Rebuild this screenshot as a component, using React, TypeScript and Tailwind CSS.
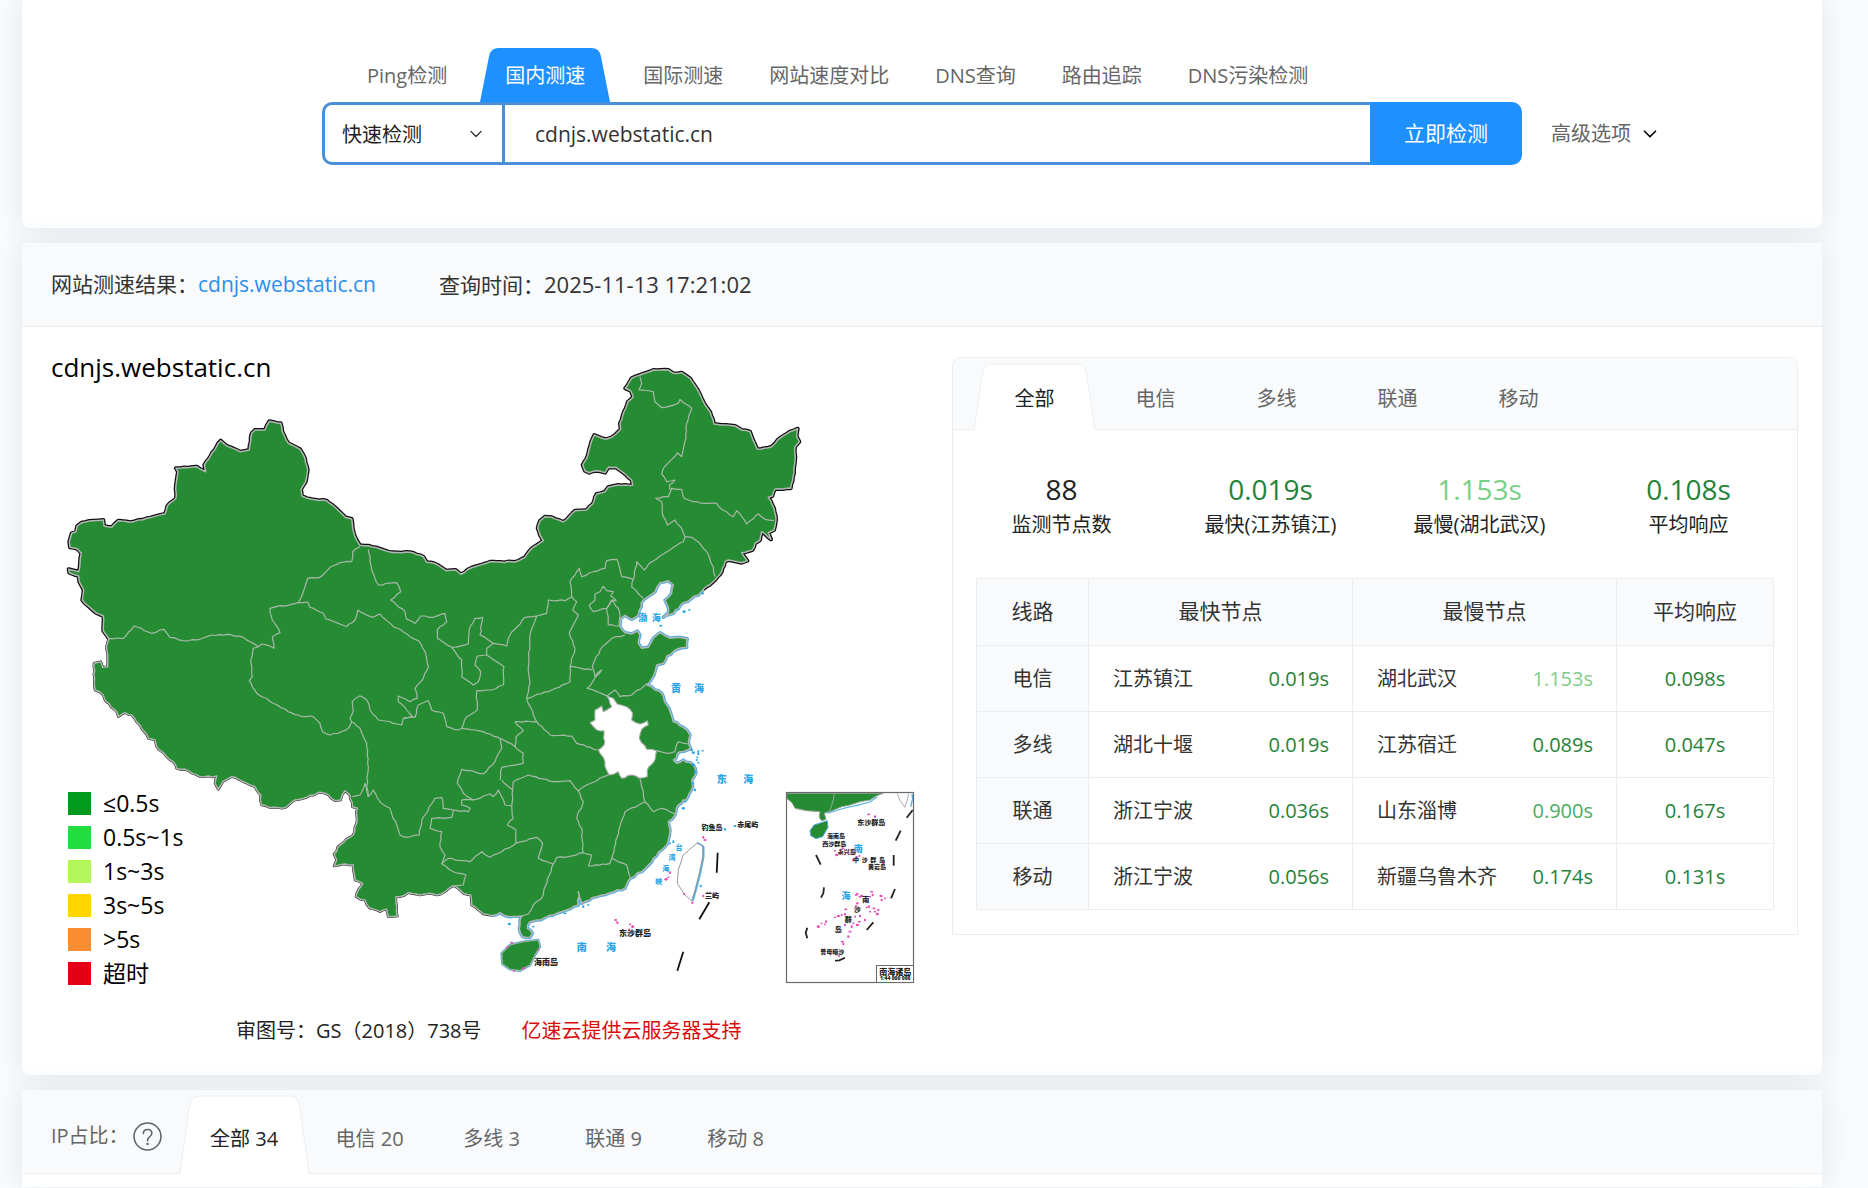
import { ChevronDown } from "lucide-react";
import type { ReactNode } from "react";

type Point = [number, number];

/* ---------- Map geometry ---------- */

// Sheets are digitised at three units per map pixel, each with its own origin.
const sheetOrigins = {
  west: [40, 400],
  northeast: [540, 350],
  north: [360, 520],
  east: [560, 560],
  south: [320, 740],
  inset: [770, 780],
} as const;

type Sheet = keyof typeof sheetOrigins;

function at(sheet: Sheet, list: string): Point[] {
  const [ox, oy] = sheetOrigins[sheet];
  return list
    .trim()
    .split(/\s+/)
    .map((pair) => {
      const [x, y] = pair.split(",").map(Number);
      return [ox + x / 3, oy + y / 3] as Point;
    });
}

// Breaks long segments into slightly displaced ones, as real borders are never straight.
function roughen(points: Point[], amount = 1): Point[] {
  const out: Point[] = [];
  points.forEach((p, i) => {
    out.push(p);
    const q = points[i + 1];
    if (!q) return;
    const dx = q[0] - p[0];
    const dy = q[1] - p[1];
    const len = Math.hypot(dx, dy);
    const steps = Math.floor(len / 3.5);
    for (let k = 1; k < steps; k++) {
      const t = k / steps;
      const seed = Math.sin(p[0] * 12.9 + p[1] * 78.2 + k * 37.7) * 4375.5;
      const off = (seed - Math.floor(seed) - 0.5) * 2 * amount;
      out.push([p[0] + dx * t - (dy / len) * off, p[1] + dy * t + (dx / len) * off]);
    }
  });
  return out;
}

function path(points: Point[], closed = false) {
  return "M" + points.map(([x, y]) => `${x.toFixed(1)} ${y.toFixed(1)}`).join("L") + (closed ? "Z" : "");
}

const northBorder = roughen([
  ...at("west", "207,716 190,692 190,648 168,638 145,618 127,600 131,570 118,545 116,528 88,518 86,508 116,515 120,490 124,460 112,446 90,442 88,425 95,400 108,395 112,378 125,368 160,362 190,360 192,378 215,382 235,362 270,367 320,355 375,342 382,318 408,295 408,255 414,215 408,205 470,200 480,207 497,215 493,195 542,122 560,138 600,155 628,150 635,100 645,90 675,90 688,64 722,70 727,95 745,130 780,148 795,175 803,210 797,245 783,268 786,288 815,298 860,302 885,322 915,352 935,357 938,385 945,410 960,436 985,437 1030,450 1060,458"),
  ...at("north", "100,97 150,97 190,110 200,127 222,130 258,152 287,150 302,163 335,143 390,125 465,126 495,112 518,83 550,62 540,45 533,25"),
  ...at("northeast", "0,513 15,500 35,502 70,516 105,482 140,480 158,462 170,432 195,425 205,412 235,405 278,406 275,390 250,368 228,352 205,352 195,368 172,362 148,368 135,362 128,345 140,325 150,290 163,255 198,268 215,262 242,238 240,220 252,185 264,155 280,140 272,122 256,115 275,85 300,75 340,60 385,60 400,70 425,68 450,85 470,115 490,155 510,185 522,222 545,225 585,228 605,240 630,245 640,272 652,298 695,290 715,268 750,245 773,236 770,260 778,275 765,290 766,320 762,370 752,415 705,417 697,438 685,442 702,475 708,510 702,540 685,548 693,568 665,545 660,570 645,580 637,600 605,608 622,632 605,638 565,630 555,635 545,665 525,690 490,718"),
], 0.5);

const coast = roughen([
  ...at("east", "430,90 415,105 370,128 340,160 310,172 325,158 322,135 315,120 335,100 340,75 325,62 300,68 285,95 250,120 238,150 235,165 215,178 195,166 182,175 180,200 195,218 215,222 232,213 240,225 235,250 245,265 265,262 280,235 300,218 330,235 355,232 382,237 380,262 350,268 320,288 310,310 290,315 285,335 262,375 285,390 305,400 320,435 340,485 370,502 390,525 385,545 392,565 360,575 340,600 350,610 370,600 400,615 408,640 395,660 398,680 388,700 378,720"),
  ...at("south", "1090,180 1075,195 1065,225 1045,245 1050,270 1045,300 1035,320 1000,355 965,395 930,415 915,445 870,458 830,470 785,490 775,455 775,495 740,510 700,525 650,540 630,545 622,565 637,580 630,592 608,590 598,565 600,540 605,528 570,530 540,518 515,527"),
], 1);

const southBorder = roughen([
  ...at("south", "515,527 490,522 455,495 452,465 430,460 400,437 375,455 350,465 330,460 300,465 265,458 240,470 228,470 230,500 232,528 205,530 200,508 180,515 150,505 135,480 108,470 115,450 128,430 105,420 100,375 75,372 42,378 50,360 42,342 60,315 100,285 110,250 112,205 97,200 90,165 75,152 62,180 45,182 15,160 0,157"),
  ...at("west", "840,1177 800,1192 765,1200 738,1222 700,1222 665,1215 662,1185 645,1160 610,1145 575,1130 548,1145 535,1168 525,1150 530,1128 480,1130 445,1112 410,1105 400,1085 380,1070 350,1040 345,1020 325,1015 300,975 275,945 255,938 235,950 230,935 198,905 190,885 165,870 163,845 162,790 182,785 188,802 203,800 200,750 207,716"),
], 0.9);

const mainland = path([...northBorder, ...coast, ...southBorder], true);

const anhui = path(
  roughen(at("east", "140,408 160,415 172,432 200,440 218,460 215,480 240,492 262,482 265,495 245,508 238,535 260,568 290,572 282,605 262,630 262,650 238,655 215,645 185,655 175,635 148,645 135,620 130,592 115,570 132,555 132,512 110,510 90,488 105,480 105,450 125,438 130,455 155,440 140,408"), 0.8),
  true,
);

const provinceLines: [Sheet, string][] = [
  ["west", "207,716 248,716 282,678 335,700 372,688 390,712 430,722 480,718 515,705 560,703 610,712 655,740 665,732 702,745 697,710 720,698 697,660 690,625 775,608"],
  ["west", "775,608 790,575 803,535 838,533 870,502 900,488 935,485 938,455 960,440"],
  ["west", "775,608 803,606 810,622 850,640 858,657 920,680 945,660 953,630 1000,652 1020,642 1060,680 1080,688"],
  ["north", "120,328 150,350 175,362 195,395 205,440 190,475 165,505 172,535 150,545 115,528 115,545 140,570 158,590 130,595 125,615 75,603 55,600 30,570 20,540 0,527"],
  ["west", "960,887 937,905 940,930 930,955 935,965 960,985 980,1030 985,1100 980,1160 985,1190"],
  ["west", "655,740 640,745 632,780 637,830 628,842 650,880 700,910 745,935 785,950 815,948 840,970 848,995 870,1005 895,1000 925,985 935,965"],
  ["south", "97,170 120,165 135,130 145,170 160,150 180,185 210,205 240,285 260,292 298,285 305,240 345,175 365,172 370,205 400,210 395,232 335,235 330,265 365,275 360,320 375,345 365,372"],
  ["north", "25,88 35,150 55,195 110,188 122,215 92,240 135,275 140,298 165,310 182,288 220,292 255,280 260,305 232,330 232,355 275,382"],
  ["north", "275,382 325,372 330,320 345,295 368,292 360,345 385,360 400,370 380,385 380,405 352,408 345,435 362,455 355,485 340,495 305,470 305,420 275,382"],
  ["north", "380,405 432,440 430,495 395,510 350,512 352,570 320,590 305,625"],
  ["north", "400,370 440,378 450,345 495,292 530,288 510,345 505,440 510,490 500,535 530,605"],
  ["north", "530,288 560,280 565,240 615,242 635,230 650,245 638,270 655,285 628,340 645,385 630,440 630,485 575,510 500,535"],
  ["north", "635,230 630,185 658,145 665,170 700,155 735,145 740,122 770,118 785,170 820,178 830,125 852,150 875,125 900,108"],
  ["northeast", "360,618 390,600 430,575 435,560 425,535 405,510 382,525 370,500 365,455 347,445 385,440 395,415 425,418 432,445 460,455 495,460 530,460 548,480 580,500 590,482 620,522 655,492 675,508 702,512"],
  ["northeast", "435,560 455,562 475,575 500,605 520,650 525,680"],
  ["northeast", "300,80 305,100 297,120 340,125 345,155 365,173 415,160 420,148 455,175 440,220 438,265 425,320 412,308 370,355 365,372 380,395 405,390 388,405 390,420"],
  ["north", "820,178 815,200 850,235"],
  ["north", "730,198 740,212 760,215 752,228 768,242 755,240 740,265 700,275 688,255 705,240 705,222 720,215 730,198"],
  ["north", "755,240 775,265 780,290 778,318 745,315 745,290 740,265 755,240"],
  ["north", "795,345 755,355 720,390 697,440 705,470 725,450 682,505 740,528 765,510 780,530 815,525 850,500 862,490"],
  ["north", "630,440 697,450"],
  ["north", "465,605 530,605 570,645 635,648 650,670 712,690"],
  ["north", "130,595 165,592 175,555 205,542 215,570 250,580 260,620 295,630 305,625 345,630 380,640 420,655 465,680 490,700 490,730 425,742 420,780"],
  ["north", "465,680 468,650 490,632 465,605"],
  ["north", "420,655 425,685"],
  ["south", "545,25 525,65 490,102 455,92 425,88 412,130 430,160 460,180 510,162 520,170 535,150 555,195 575,198 578,150 545,120"],
  ["south", "460,180 425,180 425,195 450,205 445,215 400,210"],
  ["south", "578,150 580,125 625,105 700,125 750,122 775,152 800,135 870,102"],
  ["south", "575,198 580,235 562,255 588,270 588,310"],
  ["south", "365,372 385,355 450,365 485,335 510,352 545,335 588,310 650,292 668,310 655,355 700,372 710,352 745,350 790,338 815,345 805,378 870,370 875,355"],
  ["south", "775,152 790,185 770,235 785,265 790,338"],
  ["south", "875,355 900,260 915,215 975,185 960,118"],
  ["south", "975,185 1000,215 1025,205 1070,222"],
  ["south", "875,355 920,375 930,410"],
  ["south", "700,372 675,440 665,475 640,495 625,522 605,528"],
  ["south", "365,372 400,395 438,405 430,435 400,437"],
  ["east", "290,572 320,580 345,575 355,545 385,552"],
];

const hainan = path(at("south", "545,640 570,615 610,605 655,600 660,620 645,645 630,675 600,692 570,688 547,672"), true);
const taiwan = path(at("south", "1130,310 1148,318 1148,350 1138,400 1125,450 1115,482 1095,465 1072,430 1075,390 1090,345"), true);
const taiwanEast = path(at("south", "1130,310 1149,320 1149,350 1139,400 1126,450 1117,482"));

const seaMarks = [
  ...at("south", "1115,30 1135,42 1130,60 1120,75 1135,68 1125,95 1118,130 1125,150 1095,185 1090,205 1050,310 1060,305 735,520 790,500 805,495 568,552 640,560 1215,268 1245,258 1142,438"),
  ...at("east", "388,150 372,155 355,148 428,100 302,197 415,575 428,572 400,578 412,592 405,690"),
];
const islets = at("south", "887,540 892,548 930,553 938,560 928,568 1150,292 1155,300 1050,398 1045,412 1038,418 1092,462 1117,488 575,608 562,622 582,693 610,685 655,630 1150,468");
const insetIslets = at("inset", "296,103 315,110 195,212 200,225 210,218 218,205 250,240 260,232 268,228 340,248 258,345 262,342 305,335 308,345 300,350 333,348 345,355 335,360 270,350 262,370 258,378 275,348 290,382 297,380 312,385 325,390 315,395 322,402 300,395 285,420 268,425 270,408 255,410 262,435 250,430 245,440 240,455 235,470 195,412 205,408 215,405 225,403 227,388 168,425 155,430 145,440 165,433 225,435 217,485 220,492 207,528");

const insetCoast = path(at("inset", "50,40 340,40 318,48 300,60 270,65 240,75 215,80 180,95 163,100 168,118 155,122 148,112 150,95 110,92 75,85 66,68 50,55"), true);
const insetHainan = path(at("inset", "120,152 132,135 172,122 174,142 158,170 138,176 122,167"), true);
const insetDashes = ["428,90 410,113", "392,152 377,182", "371,225 371,257", "375,327 363,355", "310,427 290,450", "225,533 208,541 195,542", "112,443 107,458 112,475", "162,322 160,340 153,353", "138,225 152,254"];
const dashes = ["1193,338 1190,398", "1168,487 1138,538", "1090,635 1072,692"];

type Label = [Sheet, number, number, string, number];
const seaLabels: Label[] = [
  ["north", 848, 292, "渤", 9], ["north", 889, 292, "海", 9],
  ["east", 348, 384, "黄", 10], ["east", 417, 384, "海", 10],
  ["east", 485, 657, "东", 10], ["east", 565, 657, "海", 10],
  ["south", 785, 620, "南", 10], ["south", 873, 620, "海", 10],
  ["south", 1077, 322, "台", 7], ["south", 1056, 353, "湾", 7],
  ["south", 1037, 386, "海", 7], ["south", 1016, 425, "峡", 7],
  ["inset", 265, 206, "南", 9], ["inset", 228, 347, "海", 9],
];
const placeLabels: Label[] = [
  ["south", 1176, 263, "钓鱼岛", 7], ["south", 1283, 254, "赤尾屿", 7],
  ["south", 1176, 467, "兰屿", 7], ["south", 945, 578, "东沙群岛", 8],
  ["south", 678, 665, "海南岛", 8],
  ["inset", 304, 126, "东沙群岛", 7], ["inset", 198, 167, "海南岛", 6],
  ["inset", 193, 192, "西沙群岛", 6], ["inset", 230, 215, "永兴岛", 6],
  ["inset", 258, 239, "中", 6], ["inset", 284, 239, "沙", 6],
  ["inset", 310, 239, "群", 6], ["inset", 336, 239, "岛", 6],
  ["inset", 321, 261, "黄岩岛", 6], ["inset", 287, 357, "南", 7],
  ["inset", 262, 388, "沙", 7], ["inset", 235, 419, "群", 7],
  ["inset", 205, 449, "岛", 7], ["inset", 187, 517, "曾母暗沙", 6],
  ["inset", 376, 574, "南海诸岛", 8], ["inset", 376, 594, "1:44 000 000", 5],
];

function MapLabels({ labels, className }: { labels: Label[]; className: string }) {
  return (
    <g className={className} textAnchor="middle" dominantBaseline="central">
      {labels.map(([sheet, x, y, text, size], i) => (
        <text key={i} x={sheetOrigins[sheet][0] + x / 3} y={sheetOrigins[sheet][1] + y / 3} fontSize={size}>
          {text}
        </text>
      ))}
    </g>
  );
}

function Dots({ points, className }: { points: Point[]; className: string }) {
  return (
    <g className={className}>
      {points.map(([x, y], i) => (
        <ellipse key={i} cx={x} cy={y} rx={i % 3 ? 1.1 : 1.6} ry={i % 2 ? 1.3 : 0.9} />
      ))}
    </g>
  );
}

function ChinaMap() {
  return (
    <svg viewBox="51 357 901 640" className="block w-full" role="img" aria-label="全国测速地图">
      <g fill="none" strokeLinejoin="round">
        <path d={path(northBorder)} stroke="#111" strokeWidth="4" />
        <path d={path(southBorder)} stroke="#222" strokeWidth="2.6" />
        <path d={path(coast)} stroke="#4aa9e6" strokeWidth="3.4" />
        <path d={hainan} stroke="#4aa9e6" strokeWidth="2.6" />
        <path d={mainland} fill="#258c34" stroke="#b3b8b3" strokeWidth="1.5" />
        <path d={hainan} fill="#258c34" stroke="#a9b5a9" strokeWidth="1.2" />
        {provinceLines.map(([sheet, list], i) => (
          <path key={i} d={path(roughen(at(sheet, list), 0.7))} stroke="#a9b8a9" strokeWidth="1.2" />
        ))}
        <path d={anhui} fill="#fff" stroke="#a3aaa3" strokeWidth="1.1" />
        <path d={taiwanEast} stroke="#57aee5" strokeWidth="3" />
        <path d={taiwan} fill="#fff" stroke="#8e8e8e" strokeWidth="0.9" />
        {dashes.map((d) => (
          <path key={d} d={path(at("south", d))} stroke="#111" strokeWidth="1.8" />
        ))}
      </g>
      <Dots points={seaMarks} className="fill-[#2aa5e8]" />
      <Dots points={islets} className="fill-[#e44fb4]" />
      <g fill="none">
        <path d={insetCoast} fill="#258c34" stroke="#8fa58f" strokeWidth="1" />
        <path d={path(at("inset", "163,100 180,92 190,60 193,40"))} stroke="#a9b8a9" strokeWidth="0.8" />
        <path d={path(at("inset", "172,100 225,84 260,76 300,66 322,50"))} stroke="#57aee5" strokeWidth="1.2" />
        <path d={insetHainan} fill="#258c34" stroke="#57aee5" strokeWidth="1" />
        <path d={path(at("inset", "382,40 390,62 405,82 412,60 416,40"))} stroke="#999" strokeWidth="0.8" />
        <path d={path(at("inset", "422,80 428,55 426,42"))} stroke="#57aee5" strokeWidth="1.4" />
        {insetDashes.map((d) => (
          <path key={d} d={path(at("inset", d))} stroke="#222" strokeWidth="1.8" />
        ))}
        <rect x="786.5" y="792.5" width="127" height="190" stroke="#6b6b6b" strokeWidth="1.2" />
        <rect x="876.5" y="965.5" width="37" height="17" fill="#fff" stroke="#6b6b6b" strokeWidth="1" />
      </g>
      <Dots points={insetIslets} className="fill-[#e44fb4]" />
      <MapLabels labels={seaLabels} className="fill-[#2aa5e8] font-black" />
      <MapLabels labels={placeLabels} className="fill-[#222] font-black" />
    </svg>
  );
}

/* ---------- Page parts ---------- */

function TabShape({ className }: { className: string }) {
  return (
    <svg
      viewBox="0 0 130 70"
      preserveAspectRatio="none"
      aria-hidden="true"
      className={`absolute inset-0 size-full overflow-visible ${className}`}
    >
      <path d="M0 70L9 11Q10.500 0 19 0H111Q119.500 0 121 11L130 70" vectorEffect="non-scaling-stroke" />
    </svg>
  );
}

function CardTab({ active, className, children }: { active?: boolean; className: string; children: ReactNode }) {
  return (
    <button
      type="button"
      role="tab"
      aria-selected={!!active}
      className={`relative shrink-0 whitespace-nowrap text-center ${active ? "text-[#222]" : "text-[#666]"} ${className}`}
    >
      {active && <TabShape className="fill-white stroke-[#ebeef0]" />}
      <span className="relative">{children}</span>
    </button>
  );
}

const navTabs = ["Ping检测", "国内测速", "国际测速", "网站速度对比", "DNS查询", "路由追踪", "DNS污染检测"];

function SearchCard() {
  return (
    <section className="rounded-b-lg bg-white pt-12 pb-[63px] shadow-[0_0_30px_#dfe6ec]">
      <div className="grid grid-cols-[1fr_minmax(0,1200px)_1fr]">
        <nav className="col-start-2 flex h-[54px] items-stretch pl-[22px] text-xl text-[#666]">
          {navTabs.map((tab, i) =>
            i === 1 ? (
              <a key={tab} href="#" aria-current="page" className="relative mx-2.5 flex items-center px-[25px] pt-0.5 text-white">
                <TabShape className="fill-[#1e90ff]" />
                <span className="relative">{tab}</span>
              </a>
            ) : (
              <a key={tab} href="#" className="flex items-center px-[23px] pt-0.5 whitespace-nowrap">
                {tab}
              </a>
            ),
          )}
        </nav>
        <form className="col-start-2 flex h-[63px] rounded-[10px]" onSubmit={(e) => e.preventDefault()}>
          <div className="relative w-[183px] shrink-0 rounded-l-[10px] border-[3px] border-[#4a90d9]">
            <select
              aria-label="检测方式"
              defaultValue="快速检测"
              className="size-full appearance-none bg-transparent pt-0.5 pl-[17px] text-xl text-[#222] outline-none"
            >
              <option>快速检测</option>
              <option>缓存检测</option>
            </select>
            <ChevronDown className="pointer-events-none absolute top-1/2 right-4 size-5 -translate-y-1/2 text-[#333]" strokeWidth={1.5} />
          </div>
          <input
            type="text"
            aria-label="检测域名"
            defaultValue="cdnjs.webstatic.cn"
            className="min-w-0 flex-1 border-y-[3px] border-[#4a90d9] bg-white px-[30px] pt-0.5 text-[21px] text-[#333] outline-none"
          />
          <button type="submit" className="w-[152px] shrink-0 rounded-r-[10px] bg-[#1e90ff] text-[21px] text-white">
            立即检测
          </button>
        </form>
        <button type="button" className="flex items-center gap-2 pl-[29px] text-xl whitespace-nowrap text-[#666]">
          高级选项
          <ChevronDown className="size-[22px] text-black" strokeWidth={1.8} />
        </button>
      </div>
    </section>
  );
}

const legend = [
  ["bg-[#009a1c]", "≤0.5s"],
  ["bg-[#22dd3f]", "0.5s~1s"],
  ["bg-[#b2f65c]", "1s~3s"],
  ["bg-[#ffd500]", "3s~5s"],
  ["bg-[#fa8c31]", ">5s"],
  ["bg-[#e60016]", "超时"],
];

function MapFigure() {
  return (
    <figure className="min-w-0 flex-1">
      <div className="grid *:[grid-area:1/1]">
        <ChinaMap />
        <h2 className="justify-self-start text-[26px] leading-[20px] text-black">cdnjs.webstatic.cn</h2>
        <ul className="flex flex-col gap-[11px] self-end justify-self-start pb-3 pl-[17px]">
          {legend.map(([color, label]) => (
            <li key={label} className="flex h-[23px] items-center gap-3 text-[23px] text-black">
              <span className={`size-[23px] ${color}`} />
              {label}
            </li>
          ))}
        </ul>
      </div>
      <figcaption className="mt-[19px] flex gap-10 pl-[185px] text-xl leading-[30px] text-[#222]">
        <span>审图号：GS（2018）738号</span>
        <a href="#" className="text-[#d90b0b]">亿速云提供云服务器支持</a>
      </figcaption>
    </figure>
  );
}

const good = "text-[#258239]";
const stats = [
  ["88", "监测节点数", "text-[#222]"],
  ["0.019s", "最快(江苏镇江)", good],
  ["1.153s", "最慢(湖北武汉)", "text-[#78cf86]"],
  ["0.108s", "平均响应", good],
];

const rows = [
  { line: "电信", fast: ["江苏镇江", "0.019s"], slow: ["湖北武汉", "1.153s", "text-[#7fcb8b]"], avg: "0.098s" },
  { line: "多线", fast: ["湖北十堰", "0.019s"], slow: ["江苏宿迁", "0.089s", good], avg: "0.047s" },
  { line: "联通", fast: ["浙江宁波", "0.036s"], slow: ["山东淄博", "0.900s", "text-[#4dab5f]"], avg: "0.167s" },
  { line: "移动", fast: ["浙江宁波", "0.056s"], slow: ["新疆乌鲁木齐", "0.174s", good], avg: "0.131s" },
];

const cell = "border border-[#ebedef] p-0 font-normal";

function NodeCell({ name, time, color }: { name: string; time: string; color: string }) {
  return (
    <td className={cell}>
      <div className="flex justify-between pr-[23px] pl-6 whitespace-nowrap">
        <span>{name}</span>
        <span className={color}>{time}</span>
      </div>
    </td>
  );
}

function SummaryPanel() {
  return (
    <div className="w-[846px] shrink-0 self-start rounded-t-lg border border-[#ebedef]">
      <div role="tablist" className="flex h-[72px] items-end rounded-t-lg border-b border-[#ebedef] bg-[#f8fafc] pl-[21px] text-xl">
        {["全部", "电信", "多线", "联通", "移动"].map((tab, i) => (
          <CardTab key={tab} active={i === 0} className="-mb-px h-[66px] w-[121px] pt-1">
            {tab}
          </CardTab>
        ))}
      </div>
      <dl className="grid grid-cols-4 px-1 pt-[43px] pb-[33px] text-center">
        {stats.map(([value, label, color]) => (
          <div key={label} className="flex flex-col-reverse">
            <dt className="text-xl leading-[40px] text-[#222]">{label}</dt>
            <dd className={`text-[28px] leading-[32px] ${color}`}>{value}</dd>
          </div>
        ))}
      </dl>
      <div className="px-[23px] pb-6">
        <table className="w-full table-fixed border-collapse text-center text-xl text-[#333]">
          <colgroup>
            <col className="w-[112px]" />
            <col className="w-[264px]" />
            <col className="w-[264px]" />
            <col />
          </colgroup>
          <thead>
            <tr className="h-[67px] bg-[#f8fafc] text-[21px]">
              {["线路", "最快节点", "最慢节点", "平均响应"].map((h) => (
                <th key={h} scope="col" className={cell}>{h}</th>
              ))}
            </tr>
          </thead>
          <tbody>
            {rows.map((r) => (
              <tr key={r.line} className="h-[66px]">
                <th scope="row" className={`${cell} bg-[#f8fafc]`}>{r.line}</th>
                <NodeCell name={r.fast[0]} time={r.fast[1]} color={good} />
                <NodeCell name={r.slow[0]} time={r.slow[1]} color={r.slow[2]} />
                <td className={`${cell} ${good}`}>{r.avg}</td>
              </tr>
            ))}
          </tbody>
        </table>
      </div>
    </div>
  );
}

function ResultCard() {
  return (
    <section className="rounded-b-lg bg-white shadow-[0_0_30px_#dfe6ec]">
      <header className="flex h-[84px] items-center gap-[63px] border-b border-[#ebedef] bg-[#f8fafc] px-[29px] text-[21px] text-[#333]">
        <p>
          网站测速结果：<a href="#" className="text-[#2b8ff0]">cdnjs.webstatic.cn</a>
        </p>
        <p>
          查询时间：<time className="text-[22px]">2025-11-13 17:21:02</time>
        </p>
      </header>
      <div className="flex pt-[30px] pr-6 pb-[29px] pl-[29px]">
        <MapFigure />
        <SummaryPanel />
      </div>
    </section>
  );
}

const ipTabs = ["全部 34", "电信 20", "多线 3", "联通 9", "移动 8"];

function IpCard() {
  return (
    <section className="h-[97px] bg-white shadow-[0_0_30px_#dfe6ec]">
      <div className="flex h-[84px] items-end border-b border-[#ebedef] bg-[#f8fafc] pl-[29px] text-xl text-[#666]">
        <div className="mr-[18px] flex h-[74px] items-center">
          IP占比：
          <button type="button" aria-label="说明" className="ml-1 size-[29px]">
            <svg viewBox="0 0 28 28" className="size-full" fill="none" stroke="#5f6368" strokeWidth="1.5" strokeLinecap="round">
              <circle cx="14" cy="14" r="13" />
              <path d="M10 11.200C10 8.700 11.700 7.200 14.100 7.200C16.500 7.200 18.200 8.700 18.200 10.900C18.200 12.600 17.200 13.400 16 14.300C14.700 15.200 14.100 15.900 14.100 17.300V18" />
              <circle cx="14.100" cy="21.200" r="0.500" />
            </svg>
          </button>
        </div>
        <div role="tablist" className="flex">
          {ipTabs.map((tab, i) => (
            <CardTab key={tab} active={i === 0} className={i === 0 ? "-mb-px h-[78px] w-[129px] pt-2" : "-mb-px h-[78px] w-[122px] pt-2"}>
              {tab}
            </CardTab>
          ))}
        </div>
      </div>
    </section>
  );
}

export default function App() {
  return (
    <div className="min-h-screen overflow-hidden bg-[#fafbfc] font-['Open_Sans','Noto_Sans_CJK_SC',sans-serif]">
      <main className="mr-[46px] ml-[22px] flex flex-col gap-[15px]">
        <SearchCard />
        <ResultCard />
        <IpCard />
      </main>
    </div>
  );
}
